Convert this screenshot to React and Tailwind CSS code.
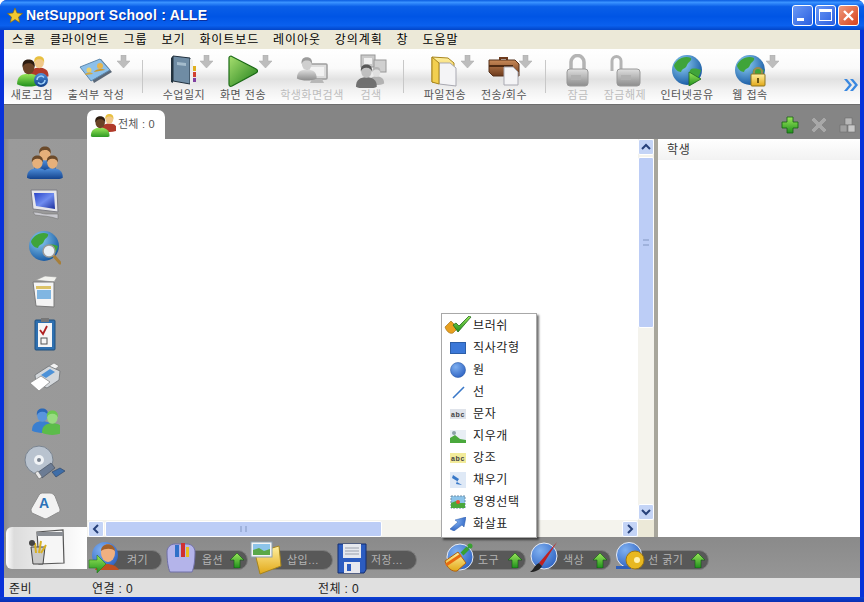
import React from 'react'

const FONT = '"Liberation Sans", "Noto Sans CJK KR", sans-serif'

function Defs() {
  return (
    <svg className="absolute w-0 h-0">
      <defs>
        <linearGradient id="blue" x1="0" y1="0" x2="0" y2="1"><stop offset="0" stopColor="#4f8fdc" /><stop offset="1" stopColor="#0f3d86" /></linearGradient>
        <linearGradient id="green" x1="0" y1="0" x2="0" y2="1"><stop offset="0" stopColor="#9be85a" /><stop offset="1" stopColor="#1f8f1c" /></linearGradient>
        <linearGradient id="play" x1="0" y1="0" x2="1" y2="1"><stop offset="0" stopColor="#a8e070" /><stop offset="1" stopColor="#1d7d18" /></linearGradient>
        <linearGradient id="gray" x1="0" y1="0" x2="0" y2="1"><stop offset="0" stopColor="#dcdcdc" /><stop offset="1" stopColor="#7d7d7d" /></linearGradient>
        <linearGradient id="gold" x1="0" y1="0" x2="0" y2="1"><stop offset="0" stopColor="#fff0a0" /><stop offset="1" stopColor="#e2a818" /></linearGradient>
        <linearGradient id="brown" x1="0" y1="0" x2="0" y2="1"><stop offset="0" stopColor="#c98a58" /><stop offset="1" stopColor="#6d3a1c" /></linearGradient>
        <linearGradient id="screen" x1="0" y1="0" x2="1" y2="1"><stop offset="0" stopColor="#2a44c8" /><stop offset="0.5" stopColor="#6f8cf0" /><stop offset="1" stopColor="#1c2f9c" /></linearGradient>
        <radialGradient id="globe" cx="0.35" cy="0.3" r="0.8"><stop offset="0" stopColor="#8fd0f5" /><stop offset="1" stopColor="#0d4f9c" /></radialGradient>
        <radialGradient id="ball" cx="0.35" cy="0.3" r="0.8"><stop offset="0" stopColor="#7fb0f0" /><stop offset="1" stopColor="#2a5fc0" /></radialGradient>
      </defs>
    </svg>
  )
}

const Person = ({ x = 0, y = 0, s = 1, shirt = 'url(#blue)', skin = '#e6b07a', hair = '#6b4a2a' }) => (
  <g transform={`translate(${x} ${y}) scale(${s})`}>
    <path d="M1 25C1 17 6 15 12 15s11 2 11 10c-6 3-16 3-22 0z" fill={shirt} />
    <ellipse cx="12" cy="9" rx="5.5" ry="6.5" fill={skin} />
    <path d="M6.2 9C5.500 3 9 1.500 12 1.500S18.500 3 17.800 9C16.500 5.500 14 5 12 5S7.500 5.500 6.200 9z" fill={hair} />
  </g>
)

const Globe = ({ cx = 16, cy = 16, r = 15 }) => (
  <g transform={`translate(${cx - r} ${cy - r}) scale(${r / 15})`}>
    <circle cx="15" cy="15" r="15" fill="url(#globe)" />
    <path d="M6 5c4-3 9-4 13-2 1 3-3 4-4 7-1 4-5 3-6 7-3 0-6-3-7-6 0-2 2-4 4-6zM19 14c4-1 7 0 10 1-1 5-4 10-8 12-2-3-1-6-3-8-1-2 0-4 1-5z" fill="#3fa43a" />
  </g>
)

const Svg = ({ w = 32, h = 32, vb, children, className = '' }) => (
  <svg width={w} height={h} viewBox={vb || `0 0 ${w} ${h}`} className={`shrink-0 ${className}`}>{children}</svg>
)

const GrayArrow = () => (
  <svg width="13" height="13" viewBox="0 0 13 13"><path d="M4 0h5v6h4l-6.500 7L0 6h4z" fill="#bdbdbd" stroke="#a8a8a8" strokeWidth="0.5" /></svg>
)

const GreenUp = () => (
  <svg width="14" height="15" viewBox="0 0 14 15" className="shrink-0"><path d="M7 0l7 7H10v8H4V7H0z" fill="url(#green)" stroke="#0e5c10" strokeWidth="0.6" /></svg>
)

/* toolbar icons */
const IconRefresh = () => (
  <Svg w={34} h={34}>
    <Person x={14} y={1} s={0.85} shirt="#b03a2a" skin="#f0c88a" hair="#e8c040" />
    <Person x={1} y={4} s={1.05} shirt="url(#green)" skin="#6b4326" hair="#2d1c10" />
    <circle cx="26" cy="26" r="7" fill="url(#blue)" /><path d="M22 26a4 4 0 0 1 7-2.500M30 26a4 4 0 0 1-7 2.500" stroke="#9fd0f8" strokeWidth="1.500" fill="none" />
  </Svg>
)
const IconCards = () => (
  <Svg w={34} h={28} className="mt-[4px]">
    <path d="M7 8L22 1l11 13-18 11z" fill="#5a6878" />
    <path d="M1 9L21 1l10 11-19 11z" fill="#8cc0ea" stroke="#5e88ac" />
    <circle cx="21" cy="8" r="3" fill="#e6b54e" /><path d="M15 14c1-3 9-4 11-2z" fill="#c9962e" />
    <circle cx="10" cy="12" r="2.500" fill="#e8d070" /><path d="M6 17c1-3 6-3 8-1z" fill="#d4a83e" />
  </Svg>
)
const IconBook = () => (
  <Svg w={26} h={32}>
    <path d="M2 2l17 2v26L2 27z" fill="#6f8ca4" stroke="#20303e" /><path d="M2 2L0 4v24l2 1z" fill="#23333f" />
    <path d="M6 8l9 1v3l-9-1z" fill="#a4bccc" /><path d="M19 5l3 1v24l-3 0z" fill="#eee" />
    <rect x="22" y="12" width="3" height="5" fill="#e0b020" /><rect x="22" y="18" width="3" height="5" fill="#d04030" /><rect x="22" y="24" width="3" height="4" fill="#8040a0" />
  </Svg>
)
const IconPlay = () => (
  <Svg w={30} h={34}><path d="M3 2c-1 0-2 1-2 2v26c0 2 1 3 3 2l24-13c2-1 2-3 0-4z" fill="url(#play)" stroke="#1b6a16" strokeWidth="1.200" /></Svg>
)
const IconStudentScreen = () => (
  <Svg w={32} h={32}>
    <rect x="11" y="10" width="20" height="15" rx="1" fill="#d9d9d9" stroke="#8f8f8f" strokeWidth="1.500" /><rect x="14" y="13" width="14" height="9" fill="#f2f2f2" />
    <path d="M16 25h10l2 4H14z" fill="#b0b0b0" />
    <Person x={0} y={2} s={0.9} shirt="url(#gray)" skin="#c8c8c8" hair="#8c8c8c" />
  </Svg>
)
const IconSearchClients = () => (
  <Svg w={32} h={34}>
    <rect x="6" y="1" width="14" height="12" fill="#c0c0c0" stroke="#888" /><rect x="19" y="6" width="12" height="12" fill="#c9c9c9" stroke="#888" /><rect x="9" y="4" width="8" height="6" fill="#eee" />
    <Person x={13} y={12} s={0.7} shirt="#aaa" skin="#ddd" hair="#aaa" />
    <Person x={0} y={9} s={0.95} shirt="#5c5c5c" skin="#b8b8b8" hair="#3c3c3c" />
  </Svg>
)
const IconFolderFile = () => (
  <Svg w={30} h={34}>
    <path d="M2 3l16 1 6 5v22L2 28z" fill="url(#gold)" stroke="#a8851c" />
    <path d="M9 9h11l6 5v18l-17-2z" fill="#f4f4f6" stroke="#a9a9b2" />
    <path d="M2 3l7 6v21l-7-2z" fill="#f2cf50" stroke="#a8851c" />
  </Svg>
)
const IconCase = () => (
  <Svg w={32} h={32}>
    <path d="M11 3h9v3h-2V5h-5v1h-2z" fill="#6d3a1c" />
    <path d="M1 6h26l4 4v12H5L1 18z" fill="url(#brown)" stroke="#55301a" />
    <rect x="1" y="11" width="24" height="2" fill="#4e2a12" />
    <path d="M16 13h9l5 5v13H16z" fill="#f4f4f6" stroke="#a9a9b2" />
  </Svg>
)
const IconLock = ({ open }) => (
  <Svg w={32} h={34}>
    {open
      ? <path d="M3 17V7a4.500 4.500 0 0 1 9 0v10" fill="none" stroke="#a8a8a8" strokeWidth="3" />
      : <path d="M9 16V8a6 6 0 0 1 13 0v8" fill="none" stroke="#a8a8a8" strokeWidth="3.500" />}
    <rect x={open ? 8 : 5} y="15" width={open ? 23 : 21} height="17" rx="3" fill="url(#gray)" stroke="#8a8a8a" />
    <rect x={open ? 12 : 9} y="21" width="10" height="5" fill="#a8a8a8" />
  </Svg>
)
const IconNetShare = () => (
  <Svg w={32} h={32}><Globe /><path d="M18 18l12 7-12 7z" fill="url(#green)" stroke="#1e6a1a" strokeWidth="0.8" /></Svg>
)
const IconWebLock = () => (
  <Svg w={32} h={34}>
    <Globe />
    <path d="M20 21v-3a4 4 0 0 1 8 0v3" fill="none" stroke="#9a8a50" strokeWidth="2" />
    <rect x="17" y="20" width="14" height="12" rx="1" fill="url(#gold)" stroke="#8d7520" /><rect x="23" y="24" width="2" height="5" fill="#6b5510" />
  </Svg>
)

/* sidebar icons */
const SideGroup = () => (
  <Svg w={38} h={34}>
    <Person x={7} y={0} s={1} />
    <Person x={0} y={9} s={0.95} /><Person x={15} y={9} s={0.95} />
  </Svg>
)
const SideMonitor = () => (
  <Svg w={30} h={32}>
    <path d="M1 1l26 0 1 22-25-3z" fill="#e6e6ea" stroke="#7d7d85" /><path d="M4 4h20l1 16-19-3z" fill="url(#screen)" />
    <path d="M3 23c6 0 10 2 13 2l12 0 0 5c-8-3-16-3-23-4z" fill="#c9c9cf" stroke="#777" strokeWidth="0.6" />
  </Svg>
)
const SideGlobe = () => (
  <Svg w={32} h={34}>
    <Globe cx={15} cy={15} r={15} />
    <path d="M24 24l7 8" stroke="#a77f3a" strokeWidth="3" strokeLinecap="round" />
    <circle cx="20" cy="20" r="6" fill="#e9eff4" stroke="#999" strokeWidth="1.500" />
  </Svg>
)
const SideSheet = () => (
  <Svg w={26} h={34}>
    <path d="M4 6l9-4 12 1-3 5z" fill="#f2f2ee" stroke="#999" strokeWidth="0.6" />
    <path d="M1 8l21 0 0 25-18-1z" fill="#f4f4f4" stroke="#7a7a7a" />
    <rect x="4" y="12" width="15" height="3" fill="#dcc266" /><rect x="5" y="16" width="14" height="9" fill="#80b6e2" />
  </Svg>
)
const SideClip = () => (
  <Svg w={22} h={34}>
    <rect x="1" y="3" width="20" height="30" rx="1" fill="#2f70b0" stroke="#20507e" /><rect x="4" y="6" width="14" height="24" fill="#f6f6f6" />
    <rect x="7" y="1" width="8" height="4" fill="#777" />
    <path d="M6 13l3 4 4-8" stroke="#b02020" strokeWidth="1.800" fill="none" /><rect x="7" y="21" width="6" height="6" fill="none" stroke="#555" />
  </Svg>
)
const SidePrinter = () => (
  <Svg w={32} h={30}>
    <path d="M17 6l8-5 5 3-7 6z" fill="#f2f2f2" stroke="#777" strokeWidth="0.6" />
    <path d="M6 13L20 4l11 5-1 9-12 8-11-5z" fill="#d4d8dc" stroke="#6e7276" strokeWidth="0.8" /><path d="M12 13l9-6 5 3-9 6z" fill="#4d92d8" />
    <path d="M1 21l11-7 9 6-11 9z" fill="#ffffff" stroke="#8a8a8a" strokeWidth="0.8" />
  </Svg>
)
const SidePeople = () => (
  <Svg w={30} h={30}>
    <Person x={1} y={2} s={0.95} shirt="#3a7fd0" skin="#5a95dc" hair="#2a68b8" />
    <Person x={11} y={4} s={0.95} shirt="#5cbc4a" skin="#98dc80" hair="#6cc850" />
  </Svg>
)
const SideDisc = () => (
  <Svg w={42} h={36}>
    <circle cx="15" cy="15" r="14" fill="#b9c3cf" stroke="#7a8490" /><circle cx="15" cy="15" r="5" fill="#f0f3f6" /><circle cx="15" cy="15" r="2" fill="#7a8490" />
    <path d="M13 28l14-10 4 5-13 10z" fill="#6c7c94" stroke="#3c4656" strokeWidth="0.6" /><path d="M11 28l3-2 4 6-3 2z" fill="#e8e8e8" stroke="#555" strokeWidth="0.5" />
    <path d="M28 27l8-4 5 3-9 6z" fill="#3f6ea8" stroke="#2a3f60" strokeWidth="0.6" />
  </Svg>
)
const SideKey = () => (
  <Svg w={32} h={28}>
    <path d="M2 17L10 3c1-2 3-2 5-2h6c2 0 3 1 5 3l5 13c0 2 0 3-3 4l-9 5c-2 1-3 1-5 0L3 21c-1-1-1-3-1-4z" fill="#f2f2f2" stroke="#8d8d8d" />
    <text x="15" y="16" fontSize="14" fontWeight="700" fill="#2c72b8" textAnchor="middle" fontFamily={FONT}>A</text>
  </Svg>
)
const SideBoard = () => (
  <Svg w={40} h={38}>
    <path d="M11 3l26-2 1 33-25 1z" fill="#f6f6f6" stroke="#555" strokeWidth="1.200" /><rect x="11" y="3" width="26" height="4" fill="#8b8f95" />
    <path d="M5 18h14l-2 17H7z" fill="#c9c9c9" stroke="#444" />
    <path d="M10 24l-1-10M13 24l2-12M15 24l5-8" stroke="#d8b020" strokeWidth="2" /><circle cx="6" cy="14" r="3" fill="#444" />
  </Svg>
)

/* small menu icons */
const MenuBrush = () => (
  <Svg w={28} h={20}>
    <path d="M1 11l6-6 7 7-5 5c-2 1-6 0-8-6z" fill="#e8a020" stroke="#9a6a10" strokeWidth="0.6" />
    <path d="M9 9l5 7 13-15-2-1-10 10-3-3z" fill="url(#green)" stroke="#1f6a1c" strokeWidth="0.8" />
  </Svg>
)
const MenuRect = () => <Svg w={16} h={14}><rect x="0.500" y="1.500" width="15" height="11" fill="#3b78d8" stroke="#2c5ea8" /></Svg>
const MenuCircle = () => <Svg w={16} h={16}><circle cx="8" cy="8" r="7.500" fill="url(#ball)" stroke="#2a5aa8" strokeWidth="0.6" /></Svg>
const MenuLine = () => <Svg w={14} h={14}><path d="M2 13L13 2" stroke="#3a78c8" strokeWidth="1.600" /></Svg>
const MenuAbc = ({ hi }) => (
  <Svg w={16} h={10}>
    <rect x="0" y="0" width="16" height="10" fill={hi ? '#f2eb9a' : '#dfe3ea'} />
    <text x="8" y="8" fontSize="7" fontWeight="700" fill="#444" textAnchor="middle" fontFamily={FONT}>abc</text>
  </Svg>
)
const MenuEraser = () => (
  <Svg w={16} h={13}><rect x="0" y="0" width="16" height="13" fill="#e8eef4" /><path d="M0 13V8l5-3 5 4 6 1v3z" fill="#4aa83c" /><circle cx="4" cy="3" r="2" fill="#8aa0a8" /></Svg>
)
const MenuFill = () => (
  <Svg w={16} h={16}><rect x="0" y="0" width="16" height="16" fill="#dfe9f6" /><path d="M3 3l6 4-2 3 5 3-6-1 1-3-5-3z" fill="#3878c8" /></Svg>
)
const MenuArea = () => (
  <Svg w={16} h={14}><rect x="1" y="1" width="14" height="12" fill="#8cc4ea" stroke="#7090a8" strokeDasharray="2 1" /><path d="M1 13V8l5-2 3 2 6 0v5z" fill="#4aa83c" /><circle cx="8" cy="7" r="2" fill="#e85030" /></Svg>
)
const MenuArrow = () => (
  <Svg w={16} h={14}><path d="M16 0l-2 10-2-2-8 6-4-2 8-7-3-2z" fill="url(#ball)" stroke="#2a5aa8" strokeWidth="0.5" /></Svg>
)

/* bottom bar icons */
const BarOn = () => (
  <Svg w={34} h={36}>
    <circle cx="17" cy="15" r="13" fill="url(#ball)" />
    <path d="M7 30c2-8 20-8 24 0z" fill="#c05020" /><ellipse cx="20" cy="13" rx="7" ry="9" fill="#f0b080" /><path d="M13 11c0-9 14-9 14 0-3-3-10-3-14 0z" fill="#a0602c" />
    <path d="M1 20h8v-5l9 9-9 9v-5H1z" fill="url(#green)" stroke="#267a1e" strokeWidth="0.6" />
  </Svg>
)
const BarOption = () => (
  <Svg w={30} h={32}>
    <path d="M1 10c0-4 3-8 8-8h12c5 0 8 4 8 8 0 8-1 16-3 20H4C2 26 1 18 1 10z" fill="#b4b4ea" stroke="#7070a8" />
    <rect x="9" y="3" width="4" height="12" fill="#3070c8" /><rect x="15" y="1" width="4" height="14" fill="#d03030" /><rect x="20" y="5" width="3" height="10" fill="#e8c020" />
  </Svg>
)
const BarInsert = () => (
  <Svg w={32} h={34}>
    <path d="M5 12l24-7 2 20-21 8z" fill="url(#gold)" stroke="#a8851c" />
    <rect x="1" y="1" width="21" height="15" fill="#f4f4f4" stroke="#8aa0b0" /><rect x="3" y="3" width="17" height="11" fill="#8cc4ea" /><path d="M3 14V9l6-2 5 3 6-2v6z" fill="#59a848" />
  </Svg>
)
const BarSave = () => (
  <Svg w={30} h={32}>
    <path d="M1 2h28v26l-2 3H1z" fill="#2c5cc0" stroke="#142e70" /><rect x="6" y="2" width="18" height="14" fill="#e6e8ee" /><path d="M8 6h14M8 9h14M8 12h14" stroke="#9aa0ac" />
    <rect x="7" y="20" width="16" height="11" fill="#e8e8ee" /><rect x="10" y="22" width="4" height="7" fill="#2c5cc0" />
  </Svg>
)
const BarTool = () => (
  <Svg w={30} h={30}>
    <circle cx="16" cy="14" r="13" fill="url(#ball)" stroke="#e8ecf4" />
    <path d="M1 18l13-9 8 11-9 8c-5 1-10-3-12-10z" fill="url(#gold)" stroke="#b06010" /><path d="M2 22l15-10" stroke="#e86a10" strokeWidth="3" />
    <path d="M18 11l6-6" stroke="#38a030" strokeWidth="4" /><circle cx="26" cy="3" r="2.500" fill="#38a030" />
  </Svg>
)
const BarColor = () => (
  <Svg w={30} h={32}>
    <circle cx="15" cy="14" r="13" fill="url(#ball)" stroke="#e8ecf4" />
    <path d="M28 0L10 21l3 3z" fill="#c02020" /><path d="M10 21l3 3c-2 4-7 6-12 6 4-2 4-7 9-9z" fill="#222" />
  </Svg>
)
const BarLine = () => (
  <Svg w={30} h={32}>
    <circle cx="14" cy="13" r="12.500" fill="url(#ball)" stroke="#e8ecf4" />
    <path d="M1 24h15v3H1z" fill="#2f5fb8" />
    <circle cx="20" cy="18" r="9" fill="#e8b820" stroke="#a07810" /><circle cx="22" cy="18" r="3" fill="#fff2b0" />
  </Svg>
)

const toolbar = [
  { label: '새로고침', w: 56, icon: <IconRefresh /> },
  { label: '출석부 작성', w: 72, icon: <IconCards />, arrow: 'right-[2px]' },
  { sep: true, w: 20 },
  { label: '수업일지', w: 64, icon: <IconBook />, arrow: 'right-[3px]' },
  { label: '화면 전송', w: 54, icon: <IconPlay />, arrow: 'right-[-2px]' },
  { label: '학생화면검색', w: 84, icon: <IconStudentScreen />, off: true },
  { label: '검색', w: 34, icon: <IconSearchClients />, off: true },
  { sep: true, w: 30 },
  { label: '파일전송', w: 54, icon: <IconFolderFile />, arrow: 'right-[-2px]' },
  { label: '전송/회수', w: 64, icon: <IconCase />, arrow: 'right-[4px]' },
  { sep: true, w: 18 },
  { label: '잠금', w: 48, icon: <IconLock />, off: true },
  { label: '잠금해제', w: 46, icon: <IconLock open />, off: true },
  { label: '인터넷공유', w: 78, icon: <IconNetShare /> },
  { label: '웹 접속', w: 48, icon: <IconWebLock />, arrow: 'right-[-5px]' },
]

const menus = ['스쿨', '클라이언트', '그룹', '보기', '화이트보드', '레이아웃', '강의계획', '창', '도움말']
const sideIcons = [<SideGroup />, <SideMonitor />, <SideGlobe />, <SideSheet />, <SideClip />, <SidePrinter />, <SidePeople />, <SideDisc />, <SideKey />]
const popup = [
  ['브러쉬', <MenuBrush />], ['직사각형', <MenuRect />], ['원', <MenuCircle />], ['선', <MenuLine />], ['문자', <MenuAbc />],
  ['지우개', <MenuEraser />], ['강조', <MenuAbc hi />], ['채우기', <MenuFill />], ['영영선택', <MenuArea />], ['화살표', <MenuArrow />],
]

function ToolItem({ item }) {
  if (item.sep) {
    return (
      <div className="flex justify-center pt-[6px] shrink-0" style={{ width: item.w }}>
        <div className="w-px h-[33px] bg-[#c8c8c8]" />
      </div>
    )
  }
  return (
    <div className="relative flex flex-col items-center shrink-0" style={{ width: item.w }}>
      <div className={`h-[34px] flex items-start justify-center ${item.off ? 'opacity-85' : ''}`}>{item.icon}</div>
      <span className={`text-[11px] leading-[14px] tracking-[0.5px] whitespace-nowrap ${item.off ? 'text-[#bdbdbd]' : 'text-[#555555]'}`}>{item.label}</span>
      {item.arrow && <div className={`absolute top-[1px] ${item.arrow}`}><GrayArrow /></div>}
    </div>
  )
}

function ScrollBtn({ dir }) {
  const d = { up: 'M3 9l4-4 4 4', down: 'M3 5l4 4 4-4', left: 'M9 3L5 7l4 4', right: 'M5 3l4 4-4 4' }[dir]
  return (
    <div className="w-[16px] h-[16px] shrink-0 rounded-[2px] bg-[#c4d4f6] border border-white flex items-center justify-center">
      <svg width="14" height="14" viewBox="0 0 14 14"><path d={d} fill="none" stroke="#27417a" strokeWidth="2" /></svg>
    </div>
  )
}

function Pill({ icon, label, up, w, ml, pl }) {
  return (
    <div className="relative flex items-center h-[36px] shrink-0" style={{ width: w, marginLeft: ml }}>
      <div className="absolute left-[14px] right-0 top-[10px] h-[20px] rounded-full bg-[#585858] border border-[#7c7c7c] flex items-center pr-[3px] text-[11px] tracking-[0.5px] text-[#b4b4b4]" style={{ paddingLeft: pl }}>
        <span className="whitespace-nowrap flex-1">{label}</span>
        {up && <GreenUp />}
      </div>
      <div className="relative">{icon}</div>
    </div>
  )
}

export default function App() {
  return (
    <div className="w-[864px] h-[602px] flex flex-col bg-[#0831d9] overflow-hidden relative rounded-t-[7px]" style={{ fontFamily: FONT }}>
      <Defs />
      {/* title bar */}
      <div className="h-[30px] shrink-0 flex items-center pl-[7px] pr-[5px] bg-[linear-gradient(180deg,#0a5ce0_0%,#3a93ff_8%,#0a5fe8_22%,#0055e5_55%,#0a60ee_85%,#0245c8_100%)]">
        <svg width="16" height="16" viewBox="0 0 16 16" className="shrink-0">
          <path d="M8 1l2 5 5.500.5-4 3.500 1.200 5.500L8 12.500 3.300 15.500 4.500 10 .5 6.500 6 6z" fill="#f0c830" stroke="#8a6a10" strokeWidth="0.7" />
        </svg>
        <span className="ml-[3px] text-white font-bold text-[14px] tracking-[0.25px] whitespace-nowrap [text-shadow:1px_1px_0_#0a2f9c]">NetSupport School : ALLE</span>
        <div className="ml-auto flex gap-[2px]">
          <div className="w-[21px] h-[21px] rounded-[3px] border border-white bg-[linear-gradient(135deg,#6a98f5,#2a5fe0)] flex items-end pl-[4px] pb-[4px]"><div className="w-[7px] h-[3px] bg-white" /></div>
          <div className="w-[21px] h-[21px] rounded-[3px] border border-white bg-[linear-gradient(135deg,#6a98f5,#2a5fe0)] flex items-center justify-center"><div className="w-[13px] h-[12px] border border-white border-t-[3px]" /></div>
          <div className="w-[21px] h-[21px] rounded-[3px] border border-white bg-[linear-gradient(135deg,#ee9a7c,#d8421c)] flex items-center justify-center">
            <svg width="13" height="13" viewBox="0 0 13 13"><path d="M2 2l9 9M11 2l-9 9" stroke="#fff" strokeWidth="2.400" /></svg>
          </div>
        </div>
      </div>

      <div className="flex-1 flex flex-col mx-[4px] min-h-0">
        {/* menu bar */}
        <div className="h-[19px] shrink-0 bg-[#ece9d8] flex items-center pl-[8px] pt-px gap-[14px] text-[12px] tracking-[0.9px] text-black">
          {menus.map(m => <span key={m} className="whitespace-nowrap">{m}</span>)}
        </div>

        {/* toolbar */}
        <div className="h-[56px] shrink-0 relative flex pt-[5px] bg-[linear-gradient(180deg,#ffffff_0%,#fafafa_35%,#e2e2e2_55%,#f2f2f2_75%,#ffffff_100%)] border-b border-[#6e6e6e]">
          {toolbar.map((item, i) => <ToolItem key={i} item={item} />)}
          <svg width="16" height="16" viewBox="0 0 16 16" className="absolute right-[1px] top-[28px]">
            <path d="M1 2l5 6-5 6h3l5-6-5-6zM7 2l5 6-5 6h3l5-6-5-6z" fill="#3a88e0" />
          </svg>
        </div>

        {/* tab row */}
        <div className="h-[34px] shrink-0 bg-[#858585] flex items-end pl-[83px] relative">
          <div className="w-[78px] h-[29px] bg-white rounded-t-[7px] flex items-center pl-[3px] gap-[2px] text-[11px] tracking-[0.2px] text-[#555555]">
            <svg width="26" height="24" viewBox="0 0 26 24" className="shrink-0">
              <Person x={11} y={0} s={0.7} shirt="#b03a2a" skin="#f0c88a" hair="#e8c040" />
              <Person x={0} y={2} s={0.85} shirt="url(#green)" skin="#6b4326" hair="#2d1c10" />
            </svg>
            <span className="whitespace-nowrap">전체 : 0</span>
          </div>
          <div className="ml-auto mb-[5px] mr-[3px] flex items-center gap-[11px]">
            <svg width="18" height="18" viewBox="0 0 18 18"><path d="M6 1h6v5h5v6h-5v5H6v-5H1V6h5z" fill="url(#green)" stroke="#155f12" strokeWidth="0.8" /></svg>
            <svg width="18" height="18" viewBox="0 0 18 18"><path d="M1 4l3-3 5 5 5-5 3 3-5 5 5 5-3 3-5-5-5 5-3-3 5-5z" fill="#a8a8a8" stroke="#7a7a7a" strokeWidth="0.6" /></svg>
            <svg width="18" height="18" viewBox="0 0 18 18"><rect x="6" y="2" width="7" height="7" fill="#b8b8b8" stroke="#6e6e6e" strokeWidth="0.6" /><rect x="1" y="9" width="7" height="7" fill="#a0a0a0" stroke="#6e6e6e" strokeWidth="0.6" /><rect x="9" y="9" width="7" height="7" fill="#c8c8c8" stroke="#6e6e6e" strokeWidth="0.6" /></svg>
          </div>
        </div>

        {/* middle */}
        <div className="h-[398px] shrink-0 flex">
          {/* sidebar */}
          <div className="w-[83px] shrink-0 bg-[linear-gradient(90deg,#8a8a8a_0px,#9a9a9a_6px,#999999_100%)] flex flex-col items-center relative">
            <div className="flex flex-col items-center pt-[1px] ml-[-2px]">
              {sideIcons.map((ic, i) => (
                <div key={i} className="h-[43px] w-[50px] flex items-center justify-center">{ic}</div>
              ))}
            </div>
            <div className="absolute left-[2px] right-0 top-[388px] h-[42px] rounded-l-[6px] bg-[linear-gradient(90deg,#ffffff_0px,#dcdcdc_8px,#f0f0f0_60%,#ffffff_100%)] flex items-center justify-center pr-[2px]">
              <SideBoard />
            </div>
          </div>

          {/* drawing area with scroll bars */}
          <div className="w-[567px] shrink-0 flex flex-col">
            <div className="flex-1 flex min-h-0">
              <div className="flex-1 bg-white" />
              <div className="w-[16px] shrink-0 bg-[#f4f3ed] flex flex-col">
                <ScrollBtn dir="up" />
                <div className="h-[171px] mt-[2px] rounded-[2px] bg-[#bccdf6] border border-white flex items-center justify-center">
                  <div className="w-[6px] h-[7px] border-y-2 border-[#9fb2dc]" />
                </div>
                <div className="flex-1" />
                <ScrollBtn dir="down" />
              </div>
            </div>
            <div className="h-[17px] shrink-0 flex bg-[#f4f3ed]">
              <div className="flex-1 flex pt-px pl-px">
                <ScrollBtn dir="left" />
                <div className="w-[277px] h-[16px] ml-[1px] rounded-[2px] bg-[#bccdf6] border border-white flex items-center justify-center">
                  <div className="w-[7px] h-[6px] border-x-2 border-[#9fb2dc]" />
                </div>
                <div className="flex-1" />
                <ScrollBtn dir="right" />
              </div>
              <div className="w-[16px] shrink-0 bg-[#ece9d8]" />
            </div>
          </div>

          <div className="w-[4px] shrink-0 bg-[#a8a69c]" />

          {/* student panel */}
          <div className="flex-1 bg-white">
            <div className="h-[21px] pl-[9px] pt-px flex items-center text-[12px] tracking-[0.8px] text-[#333333] bg-[linear-gradient(180deg,#ffffff,#f2f2f2)]">학생</div>
          </div>
        </div>

        {/* bottom tool bar */}
        <div className="h-[41px] shrink-0 bg-[linear-gradient(180deg,#8a8a8a,#969696)] flex items-start pt-[3px] pl-[84px]">
          <Pill w={74} ml={0} pl={24} icon={<BarOn />} label="켜기" />
          <Pill w={82} ml={4} pl={21} icon={<BarOption />} label="옵션" up />
          <Pill w={83} ml={2} pl={22} icon={<BarInsert />} label="삽입..." />
          <Pill w={80} ml={4} pl={19} icon={<BarSave />} label="저장..." />
          <Pill w={82} ml={27} pl={19} icon={<BarTool />} label="도구" up />
          <Pill w={82} ml={3} pl={19} icon={<BarColor />} label="색상" up />
          <Pill w={94} ml={4} pl={18} icon={<BarLine />} label="선 굵기" up />
        </div>

        {/* status bar */}
        <div className="h-[19px] shrink-0 bg-[#e0e0e0] flex items-center pt-[3px] text-[12px] tracking-[0.4px] text-[#222222]">
          <span className="w-[88px] pl-[5px]">준비</span>
          <span className="w-[226px]">연결 : 0</span>
          <span>전체 : 0</span>
        </div>
      </div>
      <div className="h-[5px] shrink-0 bg-[linear-gradient(180deg,#0a3fd8,#0a2fb0)]" />

      {/* popup menu */}
      <div className="absolute left-[441px] top-[313px] w-[96px] h-[225px] bg-white border border-[#a8a8a8] shadow-[2px_2px_2px_rgba(0,0,0,0.55)] flex flex-col pt-px">
        {popup.map(([label, icon]) => (
          <div key={label} className="h-[22px] flex items-center text-[12px] tracking-[0.6px] text-[#222222]">
            <div className="w-[31px] shrink-0 flex justify-center pl-[1px]">{icon}</div>
            <span className="whitespace-nowrap">{label}</span>
          </div>
        ))}
      </div>
    </div>
  )
}
